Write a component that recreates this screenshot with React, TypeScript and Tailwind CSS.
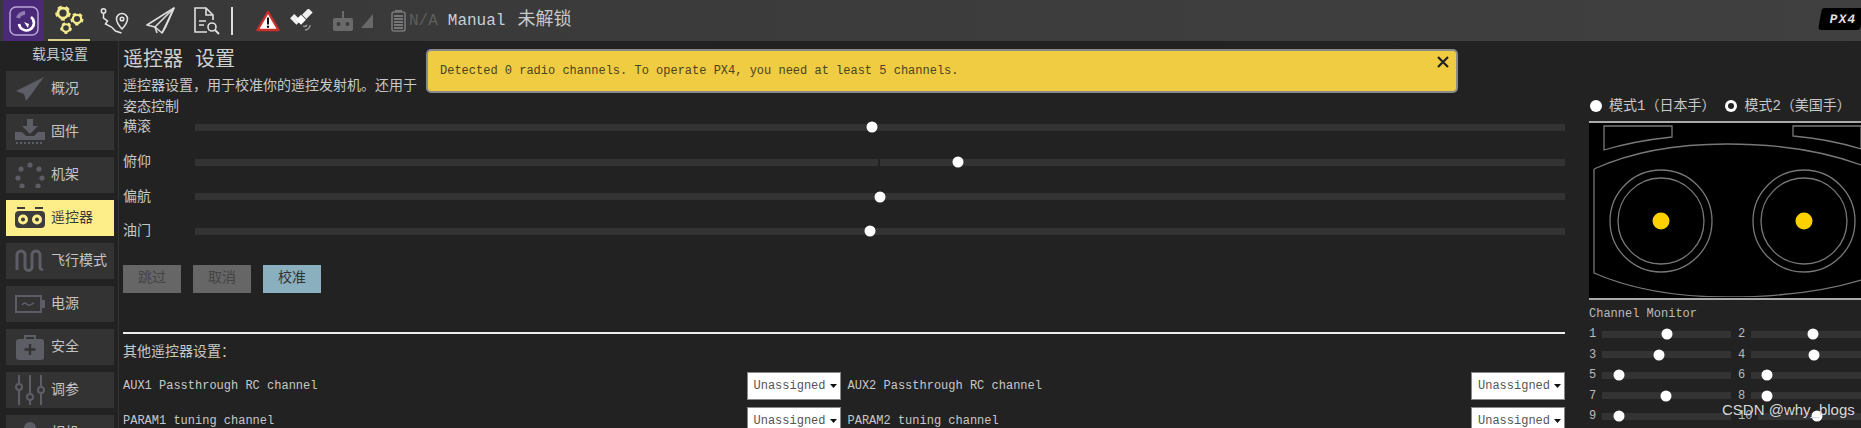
import type { ReactNode } from "react";

const ICON_GRAY = "#5d5d66";

function Gear({ cx, cy, r }: { cx: number; cy: number; r: number }) {
  return (
    <g fill="none" stroke="#f3ea8c">
      <circle cx={cx} cy={cy} r={r} strokeWidth={r * 0.55} />
      <circle
        cx={cx}
        cy={cy}
        r={r * 1.3}
        strokeWidth={r * 0.5}
        strokeDasharray={`${r * 0.8} ${r * 0.83}`}
      />
    </g>
  );
}

function LogoIcon() {
  return (
    <svg width="30" height="30" viewBox="0 0 30 30" fill="none">
      <rect x="1" y="1" width="28" height="28" rx="6" stroke="#b9a6d6" strokeWidth="1.5" />
      <path d="M9 12a7 7 0 0 1 7-5" stroke="#8f7bb0" strokeWidth="4" />
      <path d="M22 11a7.5 7.5 0 1 1-12 7" stroke="#fff" strokeWidth="2.6" />
      <path d="M15 16l5 2-1 4z" fill="#fff" />
    </svg>
  );
}

function GearsIcon() {
  return (
    <svg width="30" height="30" viewBox="0 0 30 30">
      <Gear cx={9} cy={9} r={5} />
      <Gear cx={23} cy={15} r={4.2} />
      <Gear cx={12} cy={24} r={3.8} />
    </svg>
  );
}

function RouteIcon() {
  return (
    <svg width="30" height="30" viewBox="0 0 30 30" fill="none" stroke="#e4e4e4" strokeWidth="1.5">
      <circle cx="3.5" cy="5" r="2.2" />
      <path d="M3.5 8v4l4 3-2 3 6 3 4 4 6 2" />
      <path d="M22 23s-5.5-6-5.5-10a5.5 5.5 0 0 1 11 0c0 4-5.500 10-5.500 10z" />
      <circle cx="22" cy="13" r="1.8" />
    </svg>
  );
}

function PlaneToolIcon() {
  return (
    <svg width="30" height="30" viewBox="0 0 30 30" fill="none" stroke="#dcdcdc" strokeWidth="1.6" strokeLinejoin="round">
      <path d="M28 2 1 19l8 2 7 6 3-5z" />
      <path d="M28 2 9 21l2 6M28 2 16 27M28 2l-9 20" />
    </svg>
  );
}

function DocIcon() {
  return (
    <svg width="30" height="30" viewBox="0 0 30 30" fill="none" stroke="#e0e0e0" strokeWidth="1.6">
      <path d="M15 26H3V2h11l7 7v5" />
      <path d="M14 2v7h7M7 15h7M7 19h5" />
      <circle cx="20" cy="21" r="4" />
      <path d="m23 24 4 4" strokeWidth="2" />
    </svg>
  );
}

function WarningIcon() {
  return (
    <svg width="24" height="22" viewBox="0 0 24 22">
      <path d="M12 2 22.500 20h-21z" fill="#fff" stroke="#c9302c" strokeWidth="2.4" strokeLinejoin="round" />
      <rect x="11" y="7.500" width="2" height="7" fill="#111" />
      <circle cx="12" cy="16.800" r="1.200" fill="#111" />
    </svg>
  );
}

function SatelliteIcon() {
  return (
    <svg width="24" height="24" viewBox="0 0 24 24">
      <rect x="13" y="2" width="9" height="6" transform="rotate(-45 17 5)" fill="#f0f0f0" />
      <rect x="1" y="7" width="9" height="6" transform="rotate(45 5 10)" fill="#f0f0f0" />
      <rect x="8" y="7" width="7" height="7" transform="rotate(45 11 10)" fill="#fff" />
      <path d="M15 21a5 5 0 0 0 5-5M13 17a3 3 0 0 0 4-1" stroke="#9a9a9a" strokeWidth="1.4" fill="none" />
    </svg>
  );
}

function RcIcon({ fill }: { fill: string }) {
  return (
    <svg width="20" height="20" viewBox="0 0 20 20">
      <rect x="9" y="0" width="2" height="8" fill={fill} />
      <rect x="0" y="7" width="20" height="13" rx="2" fill={fill} />
      <circle cx="5.500" cy="13" r="2" fill="#3b3b3b" />
      <circle cx="14.500" cy="13" r="2" fill="#3b3b3b" />
    </svg>
  );
}

function SignalIcon() {
  return (
    <svg width="12" height="14" viewBox="0 0 12 14">
      <path d="M12 0v14H0z" fill="#686868" />
    </svg>
  );
}

function BatteryIcon() {
  return (
    <svg width="15" height="22" viewBox="0 0 15 22" fill="none">
      <rect x="4" y="0" width="7" height="2" fill="#777" />
      <rect x="1" y="2" width="13" height="19" rx="2" stroke="#777" strokeWidth="1.600" />
      <path d="M3 6h9M3 9h9M3 12h9M3 15h9M3 18h9" stroke="#777" strokeWidth="1.800" />
    </svg>
  );
}

function Px4Logo() {
  return (
    <div className="flex h-[22px] w-[42px] skew-x-[-10deg] items-center justify-center rounded-[3px] bg-black pl-1">
      <span className="text-[13px] font-bold leading-none tracking-[1px] text-[#dddddd]">PX4</span>
    </div>
  );
}

function SideIcon({ children }: { children: ReactNode }) {
  return (
    <svg width="30" height="26" viewBox="0 0 30 26" fill={ICON_GRAY}>
      {children}
    </svg>
  );
}

const sidebarItems: { label: string; icon: ReactNode; active?: boolean }[] = [
  {
    label: "概况",
    icon: (
      <SideIcon>
        <path d="M29 1 1 15l8 3 2 7 4-5z" />
      </SideIcon>
    ),
  },
  {
    label: "固件",
    icon: (
      <SideIcon>
        <path d="M12 0h6v7h5l-8 8-8-8h5z" />
        <path d="M0 13h7l4 4h8l4-4h7v8H0z" />
        <path d="M1 24h28" stroke={ICON_GRAY} strokeWidth="2" strokeDasharray="2 2" />
      </SideIcon>
    ),
  },
  {
    label: "机架",
    icon: (
      <SideIcon>
        <circle cx="15" cy="3" r="2.600" />
        <circle cx="6" cy="7" r="2.600" />
        <circle cx="24" cy="7" r="2.600" />
        <circle cx="3" cy="16" r="2.600" />
        <circle cx="27" cy="16" r="2.600" />
        <circle cx="7" cy="24" r="2.600" />
        <circle cx="23" cy="24" r="2.600" />
      </SideIcon>
    ),
  },
  {
    label: "遥控器",
    active: true,
    icon: (
      <svg width="30" height="22" viewBox="0 0 30 22">
        <path d="M2 1h8M20 1h8" stroke="#3c3c3c" strokeWidth="2" />
        <rect x="0" y="4" width="30" height="17" rx="4" fill="#3c3c3c" />
        <circle cx="8" cy="12.500" r="5" fill="#fdee8a" />
        <circle cx="22" cy="12.500" r="5" fill="#fdee8a" />
        <circle cx="8" cy="12.500" r="2" fill="#3c3c3c" />
        <circle cx="22" cy="12.500" r="2" fill="#3c3c3c" />
      </svg>
    ),
  },
  {
    label: "飞行模式",
    icon: (
      <SideIcon>
        <path
          d="M2 22V7a4 4 0 0 1 8 0v12a3.500 3.500 0 0 0 7 0V7a4 4 0 0 1 8 0v12a2 2 0 0 0 3 2"
          fill="none"
          stroke={ICON_GRAY}
          strokeWidth="3"
        />
      </SideIcon>
    ),
  },
  {
    label: "电源",
    icon: (
      <SideIcon>
        <rect x="1" y="5" width="25" height="16" fill="none" stroke={ICON_GRAY} strokeWidth="2" />
        <rect x="27" y="9" width="3" height="8" />
        <path d="M7 14c3-4 4-1 6 0s4-1 6-2" fill="none" stroke={ICON_GRAY} strokeWidth="1.500" />
      </SideIcon>
    ),
  },
  {
    label: "安全",
    icon: (
      <SideIcon>
        <path d="M10 5V2h10v3" fill="none" stroke={ICON_GRAY} strokeWidth="2" />
        <rect x="1" y="5" width="28" height="21" rx="3" />
        <path d="M15 10v11M9.500 15.500h11" stroke="#333" strokeWidth="2.400" />
      </SideIcon>
    ),
  },
  {
    label: "调参",
    icon: (
      <svg width="30" height="30" viewBox="0 0 30 30" fill="none" stroke={ICON_GRAY} strokeWidth="2">
        <path d="M4 0v9M4 15v15M15 0v19M15 25v5M26 0v12M26 18v12" />
        <circle cx="4" cy="12" r="3" />
        <circle cx="15" cy="22" r="3" />
        <circle cx="26" cy="15" r="3" />
      </svg>
    ),
  },
  {
    label: "相机",
    icon: (
      <SideIcon>
        <path d="M9 8a6 6 0 0 1 12 0z" />
        <rect x="1" y="8" width="28" height="18" rx="3" />
      </SideIcon>
    ),
  },
];

function SidebarItem({ label, icon, active }: { label: string; icon: ReactNode; active?: boolean }) {
  return (
    <div
      className={
        active
          ? "flex h-[36px] w-[108px] shrink-0 items-center bg-[#fdee8a] text-[#3a3a3a]"
          : "flex h-[36px] w-[108px] shrink-0 items-center bg-[#333333] text-[#c4c4c4]"
      }
    >
      <div className="flex w-[45px] shrink-0 justify-center pl-[2px]">{icon}</div>
      <span className="text-[14px] leading-none">{label}</span>
    </div>
  );
}

function Knob({ left }: { left: number }) {
  return (
    <div
      className="absolute top-1/2 h-[11px] w-[11px] -translate-x-1/2 -translate-y-1/2 rounded-full bg-white"
      style={{ left }}
    />
  );
}

// left = knob centre measured from the start of the track
const attitudeRows = [
  { label: "横滚", knob: 677 },
  { label: "俯仰", knob: 763, center: true },
  { label: "偏航", knob: 685 },
  { label: "油门", knob: 675 },
];

function AttitudeRow({ label, knob, center }: { label: string; knob: number; center?: boolean }) {
  return (
    <div className="flex h-[34.7px] items-center">
      <span className="w-[72px] shrink-0 text-[14px] leading-none text-[#c8c8c8]">{label}</span>
      <div className="relative h-[7px] flex-1 bg-[#333333]">
        {center && <div className="absolute left-[683px] top-0 h-full w-[2px] bg-[#222222]" />}
        <Knob left={knob} />
      </div>
    </div>
  );
}

function AssignSelect() {
  return (
    <div className="flex h-[28px] w-[94px] shrink-0 items-center justify-between border border-[#888] bg-white pl-[6px] pr-[3px] text-[12px] text-[#555]">
      <span>Unassigned</span>
      <svg width="7" height="4" viewBox="0 0 7 4">
        <path d="M0 0h7L3.500 4z" fill="#111" />
      </svg>
    </div>
  );
}

function AssignCell({ label }: { label: string }) {
  return (
    <div className="flex h-[28px] items-center justify-between">
      <span className="text-[12px] leading-none text-[#c8c8c8]">{label}</span>
      <AssignSelect />
    </div>
  );
}

const channels = [
  [1, 65],
  [2, 62],
  [3, 57],
  [4, 63],
  [5, 17],
  [6, 16],
  [7, 64],
  [8, 16],
  [9, 17],
  [10, 59],
];

function Channel({ n, knob }: { n: number; knob: number }) {
  return (
    <div className="flex h-[20.5px] items-center">
      <span className={n === 10 ? "w-[20px] shrink-0 text-[12px] text-[#bbb]" : "w-[13px] shrink-0 text-[12px] text-[#bbb]"}>
        {n}
      </span>
      <div className="relative h-[7px] flex-1 bg-[#333333]">
        <Knob left={knob} />
      </div>
    </div>
  );
}

function StickDiagram() {
  return (
    <svg width="272" height="174" viewBox="0 0 272 174" fill="none" stroke="#777" strokeWidth="1.300">
      <path d="M15 3h68v11Q45 18 15 27z" />
      <path d="M204 3h68v23Q240 16 204 13z" />
      <path d="M5 46Q60 21 138 21T272 42" />
      <path d="M5 46v104Q60 174 138 174T272 157" />
      <circle cx="72" cy="98" r="51" />
      <circle cx="72" cy="98" r="43" />
      <circle cx="215" cy="98" r="51" />
      <circle cx="215" cy="98" r="43" />
      <circle cx="72" cy="98" r="8.500" fill="#fdd000" stroke="none" />
      <circle cx="215" cy="98" r="8.500" fill="#fdd000" stroke="none" />
    </svg>
  );
}

export default function App() {
  return (
    <div className="relative flex h-[428px] w-[1861px] flex-col overflow-hidden bg-[#222222] font-['Liberation_Mono','Noto_Sans_CJK_SC',monospace]">
      {/* toolbar */}
      <div className="flex h-[41px] shrink-0 items-center bg-gradient-to-r from-[#383838] to-[#404040] pl-[3px]">
        <div className="flex h-full w-[41px] shrink-0 items-center justify-center bg-[#4a2a78]">
          <LogoIcon />
        </div>
        <div className="ml-[4px] flex h-full w-[42px] shrink-0 items-center justify-center border-b-2 border-[#d8d08a] pb-[1px]">
          <GearsIcon />
        </div>
        <div className="ml-[10px]"><RouteIcon /></div>
        <div className="ml-[16px]"><PlaneToolIcon /></div>
        <div className="ml-[16px]"><DocIcon /></div>
        <div className="ml-[9px] h-[28px] w-[2px] bg-[#dddddd]" />
        <div className="ml-[23px]"><WarningIcon /></div>
        <div className="ml-[10px]"><SatelliteIcon /></div>
        <div className="ml-[19px]"><RcIcon fill="#6a6a6a" /></div>
        <div className="ml-[8px]"><SignalIcon /></div>
        <div className="ml-[18px]"><BatteryIcon /></div>
        <span className="ml-[3px] text-[16px] text-[#5e5e5e]">N/A</span>
        <span className="ml-[10px] text-[16px] text-[#c8d0d8]">Manual</span>
        <span className="ml-[12px] text-[18px] text-[#c8c8c8]">未解锁</span>
        <div className="ml-auto self-start pt-[8px]">
          <div className="translate-x-[1px]"><Px4Logo /></div>
        </div>
      </div>

      <div className="flex min-h-0 flex-1 items-start">
        {/* sidebar */}
        <div className="flex h-[387px] w-[119px] shrink-0 flex-col gap-[7px] border-r border-[#333333] pl-[6px] pt-[4px]">
          <div className="flex h-[19px] w-[108px] shrink-0 items-center justify-center text-[14px] leading-none text-[#c8c8c8]">
            载具设置
          </div>
          {sidebarItems.map((item) => (
            <SidebarItem key={item.label} {...item} />
          ))}
        </div>

        {/* main column */}
        <div className="ml-[4px] flex w-[1442px] shrink-0 flex-col pt-[6px]">
          <div className="h-[28px] text-[20px] leading-[28px] text-[#d0d0d0]">遥控器 设置</div>
          <div className="mt-[1px] h-[20px] text-[14px] leading-[20px] text-[#c8c8c8]">
            {"遥控器设置\uFF0C用于校准你的遥控发射机\u3002还用于"}
          </div>
          <div className="mt-[1px] h-[20px] text-[14px] leading-[20px] text-[#c8c8c8]">姿态控制</div>
          <div className="mt-[-7px] flex flex-col">
            {attitudeRows.map((row) => (
              <AttitudeRow key={row.label} {...row} />
            ))}
          </div>
          <div className="mt-[16px] flex gap-[12px]">
            <div className="flex h-[28px] w-[58px] items-center justify-center bg-[#666666] text-[14px] text-[#444444]">跳过</div>
            <div className="flex h-[28px] w-[58px] items-center justify-center bg-[#666666] text-[14px] text-[#444444]">取消</div>
            <div className="flex h-[28px] w-[58px] items-center justify-center bg-[#8ab0c0] text-[14px] text-[#333333]">校准</div>
          </div>
          <div className="mt-[39px] h-[2px] bg-[#eeeeee]" />
          <div className="mt-[8px] h-[20px] text-[14px] leading-[20px] text-[#c8c8c8]">{"其他遥控器设置\uFF1A"}</div>
          <div className="mt-[10px] grid grid-cols-2 gap-x-[7px] gap-y-[7px]">
            <AssignCell label="AUX1 Passthrough RC channel" />
            <AssignCell label="AUX2 Passthrough RC channel" />
            <AssignCell label="PARAM1 tuning channel" />
            <AssignCell label="PARAM2 tuning channel" />
          </div>
        </div>

        {/* right panel */}
        <div className="ml-[24px] flex min-w-0 flex-1 flex-col pt-[55px]">
          <div className="flex h-[20px] items-center whitespace-nowrap text-[14px] text-[#c8c8c8]">
            <div className="ml-[1px] h-[12px] w-[12px] shrink-0 rounded-full bg-white" />
            <span className="ml-[7px]">{"模式1\uFF08日本手\uFF09"}</span>
            <div className="ml-[10px] flex h-[12px] w-[12px] shrink-0 items-center justify-center rounded-full bg-white">
              <div className="h-[6px] w-[6px] rounded-full bg-[#222222]" />
            </div>
            <span className="ml-[7px]">{"模式2\uFF08美国手\uFF09"}</span>
          </div>
          <div className="mt-[5px] h-[179px] shrink-0 border-y-2 border-[#aaaaaa] bg-black">
            <StickDiagram />
          </div>
          <div className="mt-[6px] h-[16px] text-[12px] leading-[16px] text-[#bbbbbb]">Channel Monitor</div>
          <div className="mt-[2px] grid grid-cols-[142px_1fr] gap-x-[7px]">
            {channels.map(([n, knob]) => (
              <Channel key={n} n={n} knob={knob} />
            ))}
          </div>
        </div>
      </div>

      {/* alert banner */}
      <div className="absolute left-[426px] top-[49px] flex h-[44px] w-[1032px] items-center rounded-[5px] border-2 border-[#8a8a8a] bg-[#efcc42] pl-[12px] text-[12px] text-[#4a4320]">
        Detected 0 radio channels. To operate PX4, you need at least 5 channels.
        <svg className="absolute right-[6px] top-[4px]" width="14" height="14" viewBox="0 0 14 14">
          <path d="M2 2l10 10M12 2 2 12" stroke="#222" strokeWidth="2.200" />
        </svg>
      </div>

      {/* watermark */}
      <span className="absolute left-[1722px] top-[401px] font-['Liberation_Sans',sans-serif] text-[15px] leading-[18px] text-[#d8d8d8]">
        CSDN @why_blogs
      </span>
    </div>
  );
}
